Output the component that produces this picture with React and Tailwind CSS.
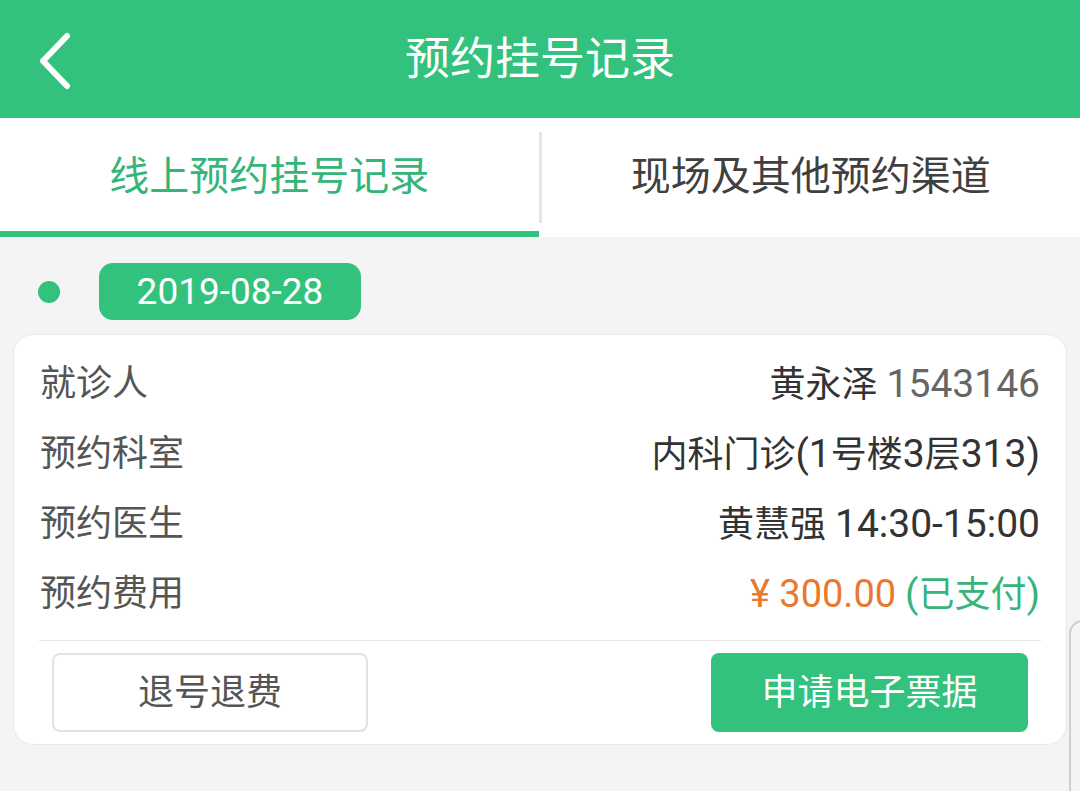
export default function App() {
  const rows = [
    { label: "就诊人", value: <><span className="text-[#333]">黄永泽</span> <span className="text-[#666] text-[39px]">1543146</span></> },
    { label: "预约科室", value: <span className="text-[#333]">内科门诊<span className="text-[39px]">(1</span>号楼<span className="text-[39px]">3</span>层<span className="text-[39px]">313)</span></span> },
    { label: "预约医生", value: <span className="text-[#333]">黄慧强 <span className="text-[39px]">14:30-15:00</span></span> },
    { label: "预约费用", value: <><span className="text-[#e8792e] text-[38px]">¥ 300.00</span> <span className="text-[#35b57a]"><span className="text-[39px]">(</span>已支付<span className="text-[39px]">)</span></span></> },
  ];

  return (
    <div className="relative w-[1080px] h-[791px] overflow-hidden bg-[#f4f4f4] font-['Roboto','Noto_Sans_CJK_SC',sans-serif]">
      {/* header */}
      <div className="relative h-[118px] bg-[#33c27d] flex items-center justify-center">
        <svg className="absolute left-[36px] top-[32px]" width="38" height="58" viewBox="0 0 38 58">
          <path d="M31 4 L7 29 L31 54" fill="none" stroke="#fff" strokeWidth="6" strokeLinecap="round" strokeLinejoin="round" />
        </svg>
        <div className="text-white text-[45px] leading-none">预约挂号记录</div>
      </div>

      {/* tabs */}
      <div className="flex h-[119px] bg-white">
        <div className="flex-1 flex flex-col">
          <div className="flex-1 flex items-center justify-center pt-[5px] text-[40px] text-[#35b57a]">线上预约挂号记录</div>
          <div className="h-[6px] bg-[#33c27d]" />
        </div>
        <div className="w-[3px] my-[14px] bg-[#e6e6e6]" />
        <div className="flex-1 flex items-center justify-center pt-[5px] pb-[6px] text-[40px] text-[#404040]">现场及其他预约渠道</div>
      </div>

      {/* date */}
      <div className="flex items-center pt-[26px] pl-[38px]">
        <div className="w-[22px] h-[22px] rounded-full bg-[#33c27d]" />
        <div className="ml-[39px] h-[57px] w-[262px] rounded-[14px] bg-[#33c27d] flex items-center justify-center text-white text-[37px]">2019-08-28</div>
      </div>

      {/* card */}
      <div className="mx-[13px] mt-[14px] w-[1054px] rounded-[20px] border border-[#e8e8e8] bg-white pt-[14px] pb-[12px]">
        <div className="px-[26px]">
          {rows.map((r) => (
            <div key={r.label} className="h-[70px] flex items-center justify-between text-[36px]">
              <span className="text-[#555]">{r.label}</span>
              <span>{r.value}</span>
            </div>
          ))}
        </div>
        <div className="mx-[25px] mt-[11px] h-px bg-[#e6e6e6]" />
        <div className="flex justify-between px-[38px] mt-[12px]">
          <button className="w-[316px] h-[79px] rounded-[8px] border-2 border-[#e2e2e2] bg-white text-[36px] text-[#555]">退号退费</button>
          <button className="w-[317px] h-[79px] rounded-[8px] bg-[#33c27d] text-[36px] text-white">申请电子票据</button>
        </div>
      </div>

      {/* partial overlay edge on the right */}
      <div className="absolute left-[1069px] top-[620px] w-[30px] h-[200px] rounded-tl-[14px] border-l-2 border-t-2 border-[#cfcfcf] bg-[#f4f4f4]" />
    </div>
  );
}
